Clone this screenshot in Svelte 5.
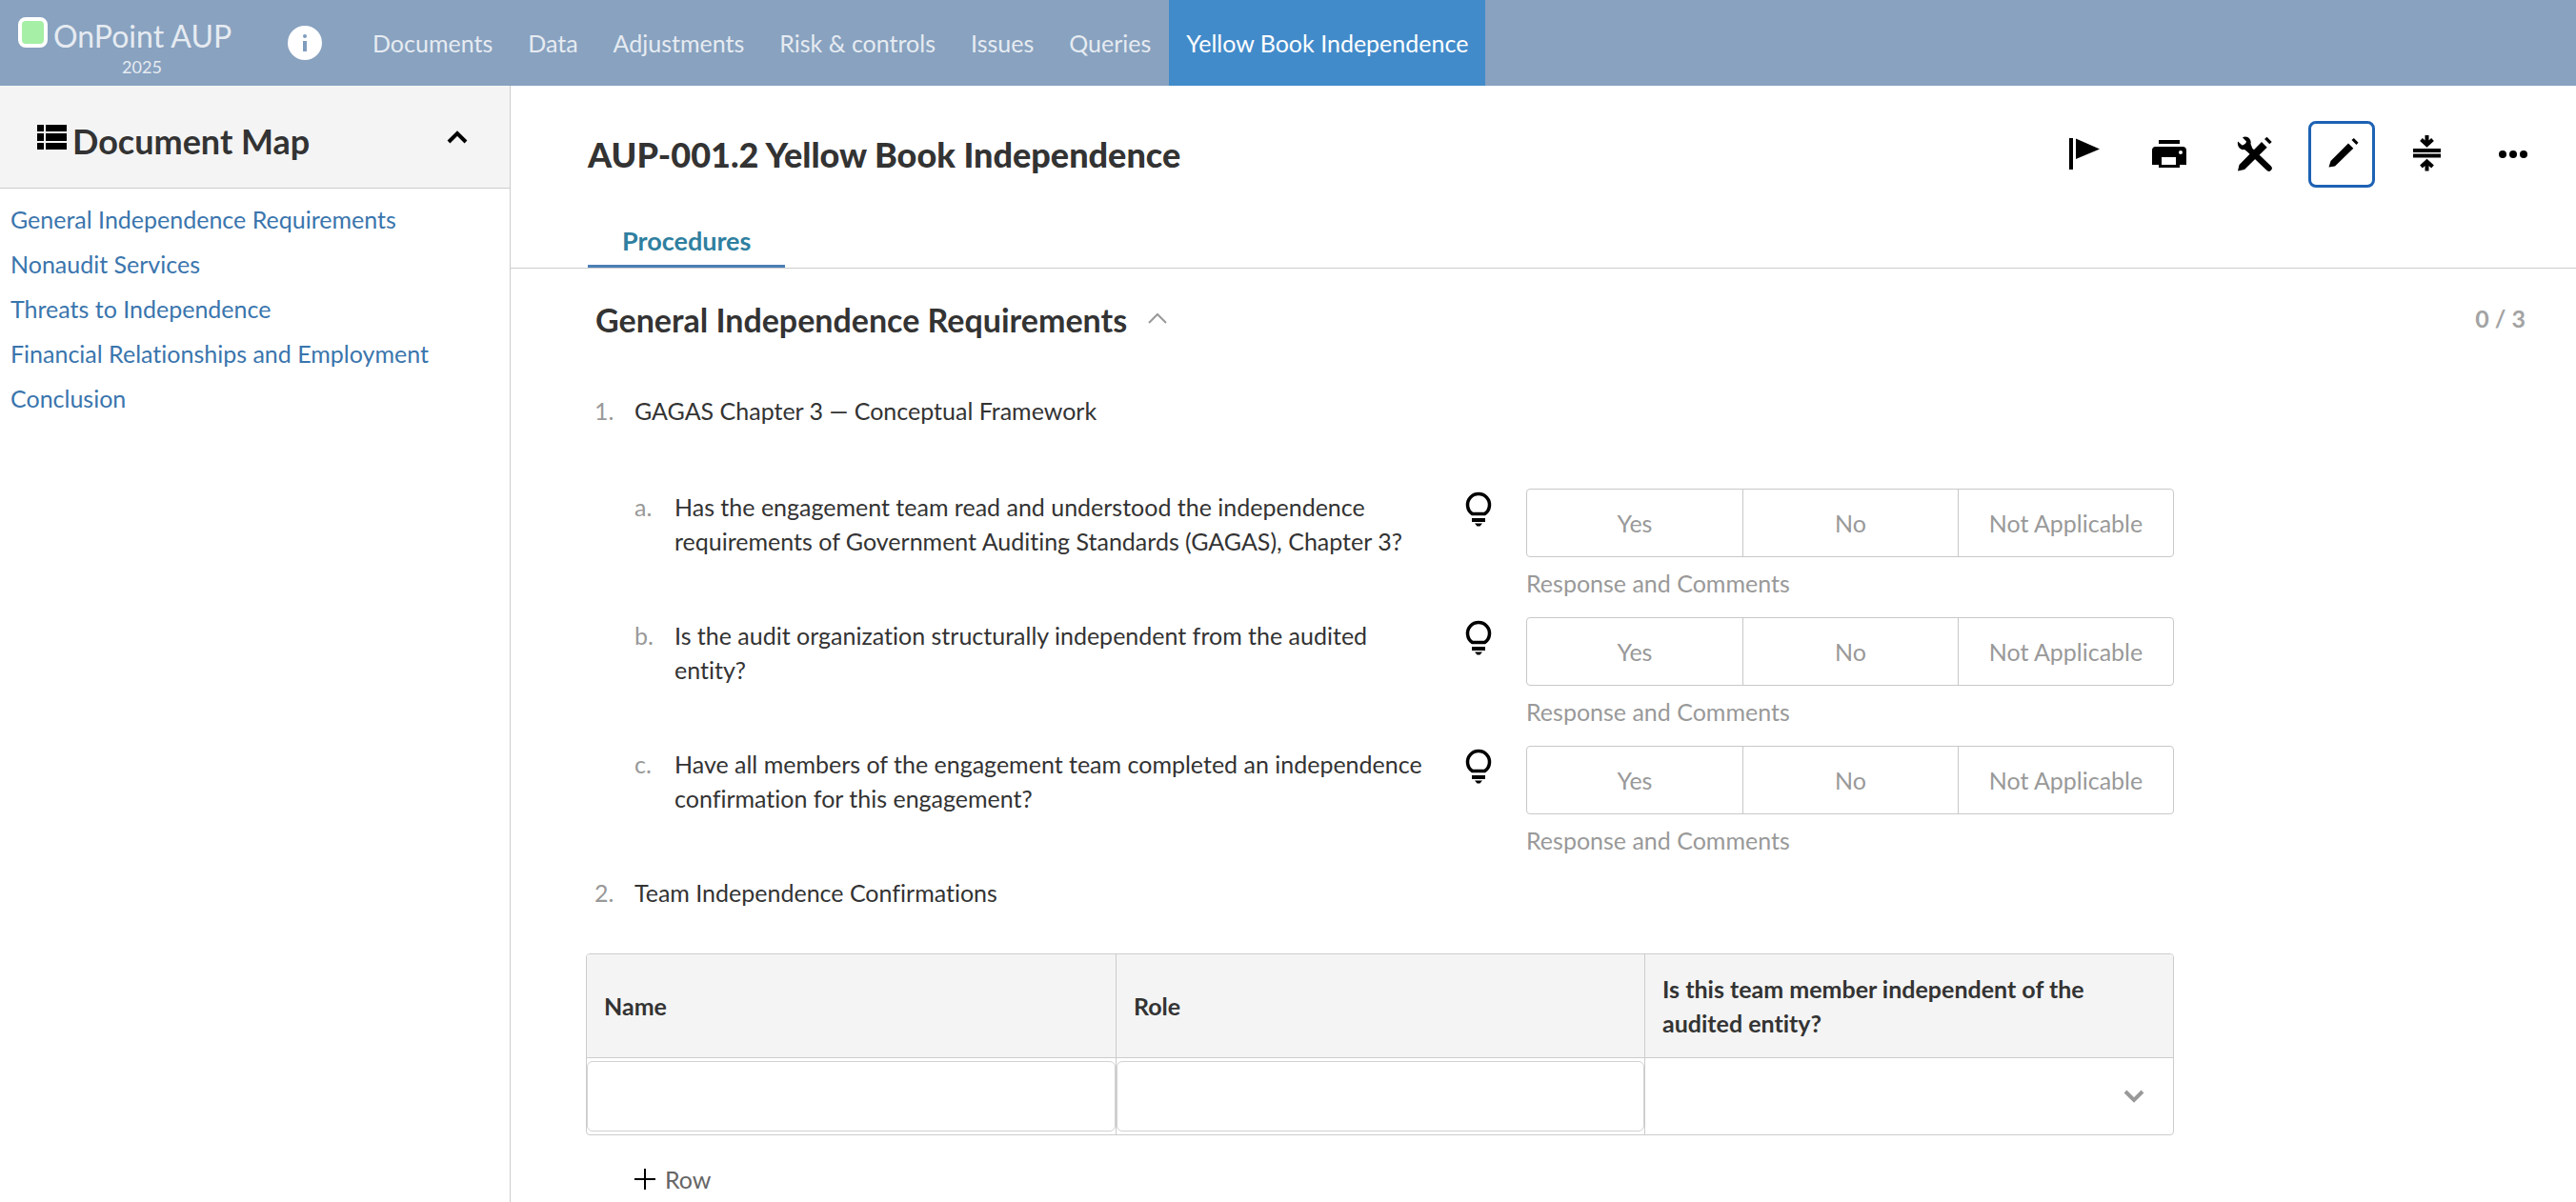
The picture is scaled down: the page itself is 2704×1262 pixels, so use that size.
<script>
    let navItems = ['Documents', 'Data', 'Adjustments', 'Risk & controls', 'Issues', 'Queries', 'Yellow Book Independence']
    let activeNav = 'Yellow Book Independence';

    let sections = [
        'General Independence Requirements',
        'Nonaudit Services',
        'Threats to Independence',
        'Financial Relationships and Employment',
        'Conclusion'
    ]

    let questions = [
        { key: 'a', text: 'Has the engagement team read and understood the independence requirements of Government Auditing Standards (GAGAS), Chapter 3?', answer: '' },
        { key: 'b', text: 'Is the audit organization structurally independent from the audited entity?', answer: '' },
        { key: 'c', text: 'Have all members of the engagement team completed an independence confirmation for this engagement?', answer: '' }
    ]
    let options = ['Yes', 'No', 'Not Applicable']

    let members = [{ name: '', role: '', independent: '' }]
    let mapOpen = true;
    let sectionOpen = true;

    $: answered = questions.filter(q => q.answer !== '').length

    const addRow = ()=>{
        members = [...members, { name: '', role: '', independent: '' }]
    }
</script>

<div class="page">
    <header class="topbar">
        <div class="brand">
            <div class="brand-name">
                <span class="logo"></span>
                <span>OnPoint AUP</span>
            </div>
            <span class="year">2025</span>
        </div>
        <button class="info" aria-label="Engagement information">
            <svg width="36" height="36" viewBox="0 0 36 36">
                <circle cx="18" cy="18" r="18" fill="#fff" />
                <circle cx="18" cy="11" r="2" fill="#7f9cbd" />
                <rect x="16" y="16" width="4" height="11" fill="#7f9cbd" />
            </svg>
        </button>
        <nav>
            {#each navItems as item (item)}
                <a href="#top" class:active={item === activeNav}>{item}</a>
            {/each}
        </nav>
    </header>

    <div class="body">
        <aside>
            <div class="map-header">
                <svg width="31" height="26" viewBox="0 0 31 26">
                    <path d="M0 0h7v7H0zM9 0h22v7H9zM0 9h7v8H0zM9 9h22v8H9zM0 19h7v7H0zM9 19h22v7H9z" />
                </svg>
                <h2>Document Map</h2>
                <button class="toggle" aria-label="Toggle document map" on:click={() => mapOpen = !mapOpen}>
                    <svg width="22" height="14" viewBox="0 0 22 14">
                        <path d="M2 12L11 3L20 12" fill="none" stroke="#000" stroke-width="4" />
                    </svg>
                </button>
            </div>
            {#if mapOpen}
                <div class="map-links">
                    {#each sections as section (section)}
                        <a href="#top">{section}</a>
                    {/each}
                </div>
            {/if}
        </aside>

        <main>
            <div class="title-row">
                <h1>AUP-001.2 Yellow Book Independence</h1>
                <div class="tools">
                    <button aria-label="Flag">
                        <svg viewBox="0 0 68 68">
                            <path d="M18 17h4v33h-4zM25 17.500L50 28.500L25 39z" />
                        </svg>
                    </button>
                    <button aria-label="Print">
                        <svg viewBox="0 0 68 68">
                            <path d="M22 19h22v4H22z" />
                            <path fill-rule="evenodd" d="M18 26h29a4 4 0 0 1 4 4v15h-7v3H22v-3h-7V30a4 4 0 0 1 3-4zM25 37v8h15v-8zM47 32a2 2 0 1 0-4 0a2 2 0 1 0 4 0z" />
                        </svg>
                    </button>
                    <button aria-label="Tools">
                        <svg viewBox="0 0 68 68">
                            <path d="M15 51.500L16.500 45L40 21L45.700 26.700L22 50zM45.500 15.700L50.700 21L48.300 23.300L43 18z" />
                            <path d="M24 26L47.500 48.500" fill="none" stroke="#000" stroke-width="6.500" stroke-linecap="round" />
                            <path d="M20 16.500C24 13.500 30 18 28.500 23L30 27L25 31L22 29C18 30 14 26 15 20.500L19.500 24.500L23 23.500L24 20.500z" />
                        </svg>
                    </button>
                    <button aria-label="Edit" class="selected">
                        <svg viewBox="0 0 68 68">
                            <path d="M20.500 47.500L22.500 41L41 22.500L46.300 27.700L27 46.500zM46.800 17L51.500 21.700L49.500 24L44.500 19z" />
                        </svg>
                    </button>
                    <button aria-label="Collapse all">
                        <svg viewBox="0 0 68 68">
                            <path d="M19 28h29v4H19zM19 33.500h29v4H19z" />
                            <path d="M33.500 14V24M27.500 18.500L33.500 24L39.500 18.500M33.500 51.500V41M27.500 47L33.500 41.500L39.500 47" fill="none" stroke="#000" stroke-width="4" />
                        </svg>
                    </button>
                    <button aria-label="More">
                        <svg viewBox="0 0 68 68">
                            <circle cx="23" cy="34" r="4" />
                            <circle cx="34" cy="34" r="4" />
                            <circle cx="45" cy="34" r="4" />
                        </svg>
                    </button>
                </div>
            </div>

            <div class="tabs">
                <button class="tab">Procedures</button>
            </div>

            <div class="section-header">
                <h2>General Independence Requirements</h2>
                <button class="toggle" aria-label="Toggle section" on:click={() => sectionOpen = !sectionOpen}>
                    <svg width="20" height="12" viewBox="0 0 20 12">
                        <path d="M1 11L10 2L19 11" fill="none" stroke="#999" stroke-width="2" />
                    </svg>
                </button>
                <span class="count">{answered} / {questions.length}</span>
            </div>

            {#if sectionOpen}
                <div class="procedures">
                    <div class="item">
                        <span class="num">1.</span>
                        <span>GAGAS Chapter 3 — Conceptual Framework</span>
                    </div>
                    <div class="questions">
                        {#each questions as question (question.key)}
                            <div class="question">
                                <span class="num">{question.key}.</span>
                                <p>{question.text}</p>
                                <button class="hint" aria-label="Guidance">
                                    <svg width="28" height="38" viewBox="0 0 28 38">
                                        <path d="M7.500 23.500A11.500 11.500 0 1 1 20.500 23.500z" fill="none" stroke="#000" stroke-width="3.500" stroke-linejoin="round" />
                                        <path d="M7 28h14v4H7zM10 33.500h8l-2.500 3h-3z" />
                                    </svg>
                                </button>
                                <div class="response">
                                    <div class="options">
                                        {#each options as option (option)}
                                            <button class:chosen={question.answer === option} on:click={() => question.answer = option}>{option}</button>
                                        {/each}
                                    </div>
                                    <button class="comment">Response and Comments</button>
                                </div>
                            </div>
                        {/each}
                    </div>
                    <div class="item">
                        <span class="num">2.</span>
                        <span>Team Independence Confirmations</span>
                    </div>
                    <table>
                        <thead>
                            <tr>
                                <th>Name</th>
                                <th>Role</th>
                                <th>Is this team member independent of the audited entity?</th>
                            </tr>
                        </thead>
                        <tbody>
                            {#each members as member, i (i)}
                                <tr>
                                    <td><input type="text" aria-label="Name" bind:value={member.name}></td>
                                    <td><input type="text" aria-label="Role" bind:value={member.role}></td>
                                    <td>
                                        <div class="select">
                                            <select aria-label="Is this team member independent of the audited entity?" bind:value={member.independent}>
                                                <option value=""></option>
                                                <option value="yes">Yes</option>
                                                <option value="no">No</option>
                                            </select>
                                            <svg width="22" height="14" viewBox="0 0 22 14">
                                                <path d="M2 2L11 11L20 2" fill="none" stroke="#999" stroke-width="4" />
                                            </svg>
                                        </div>
                                    </td>
                                </tr>
                            {/each}
                        </tbody>
                    </table>
                    <button class="add-row" on:click={addRow}>
                        <svg width="24" height="24" viewBox="0 0 24 24">
                            <path d="M12 1v22M1 12h22" stroke="#000" stroke-width="2" />
                        </svg>
                        Row
                    </button>
                </div>
            {/if}
        </main>
    </div>
</div>

<style>
    :global(body) {
        margin: 0;
        background: #fff;
    }
    .page {
        min-height: 100vh;
        display: flex;
        flex-direction: column;
        font-family: Lato, sans-serif;
        font-size: 25px;
        line-height: 36px;
        font-variant-ligatures: none;
        color: #333;
    }
    .page * {
        box-sizing: border-box;
    }
    button {
        padding: 0;
        border: 0;
        background: none;
        font: inherit;
        color: inherit;
        cursor: pointer;
    }
    svg {
        display: block;
        flex-shrink: 0;
    }
    a {
        text-decoration: none;
    }
    h1, h2, p {
        margin: 0;
    }

    .topbar {
        height: 90px;
        display: flex;
        align-items: center;
        background: #88a2c0;
        color: #e6ebf1;
    }
    .brand {
        width: 302px;
        padding: 10px 0 0 19px;
        display: flex;
        flex-direction: column;
    }
    .brand-name {
        display: flex;
        align-items: center;
        gap: 6px;
        font-size: 32px;
        line-height: 40px;
    }
    .logo {
        width: 31px;
        height: 32px;
        margin-bottom: 8px;
        border: 4px solid #fff;
        border-radius: 8px;
        background: #a6efa6;
    }
    .year {
        padding-left: 32px;
        width: 228px;
        text-align: center;
        font-size: 18px;
        line-height: 24px;
    }
    .topbar nav {
        height: 100%;
        margin-left: 35px;
        display: flex;
        gap: 1px;
    }
    .topbar nav a {
        padding: 0 18px;
        display: flex;
        align-items: center;
        color: #e6ebf1;
    }
    .topbar nav a.active {
        background: #428bca;
        color: #fff;
    }

    .body {
        flex: 1;
        display: flex;
    }
    aside {
        width: 536px;
        flex-shrink: 0;
        border-right: 1px solid #ccc;
    }
    .map-header {
        height: 108px;
        padding: 8px 44px 0 39px;
        display: flex;
        align-items: center;
        gap: 6px;
        background: #f4f4f4;
        border-bottom: 1px solid #ccc;
    }
    .map-header svg {
        margin-bottom: 8px;
    }
    .map-header h2 {
        flex: 1;
        font-size: 36px;
        line-height: 44px;
    }
    .map-links {
        padding: 9px 11px;
        display: flex;
        flex-direction: column;
    }
    .map-links a {
        line-height: 47px;
        color: #3a75ad;
    }

    main {
        flex: 1;
        min-width: 0;
    }
    .title-row {
        padding: 37px 31px 0 81px;
        display: flex;
        align-items: center;
        justify-content: space-between;
    }
    .title-row h1 {
        font-size: 36px;
        line-height: 44px;
        font-weight: 900;
    }
    .tools {
        display: flex;
        gap: 20px;
    }
    .tools button {
        width: 70px;
        height: 70px;
        border: 3px solid transparent;
        border-radius: 8px;
        display: flex;
        align-items: center;
        justify-content: center;
    }
    .tools button.selected {
        border-color: #1d62b4;
    }
    .tools svg {
        width: 68px;
        height: 68px;
    }
    .tabs {
        padding-left: 81px;
        margin-top: 28px;
        border-bottom: 1px solid #ccc;
    }
    .tab {
        padding: 10px 36px 7px;
        border-bottom: 3px solid #4a7fb5;
        font-size: 27px;
        font-weight: 700;
        color: #2f7fa0;
    }

    .section-header {
        padding: 32px 53px 0 89px;
        display: flex;
        align-items: center;
    }
    .section-header h2 {
        font-size: 34px;
        line-height: 44px;
    }
    .section-header .toggle {
        margin-left: 22px;
        padding-bottom: 4px;
    }
    .count {
        margin-left: auto;
        padding-bottom: 4px;
        font-weight: 700;
        color: #a3a3a3;
    }
    .procedures {
        max-width: 1746px;
        padding: 55px 0 40px 79px;
    }
    .item {
        padding-left: 9px;
        display: flex;
    }
    .num {
        width: 42px;
        flex-shrink: 0;
        color: #999;
    }
    .questions {
        padding: 64px 0 1px 51px;
    }
    .question {
        min-height: 135px;
        display: flex;
        align-items: flex-start;
    }
    .question > .num, .question p {
        padding-top: 1px;
    }
    .question p {
        flex: 1;
        padding-right: 32px;
    }
    .hint {
        margin: 3px 36px 0 0;
    }
    .response {
        width: 680px;
        flex-shrink: 0;
    }
    .options {
        height: 72px;
        display: grid;
        grid-template-columns: repeat(3, 1fr);
        border: 1px solid #c8c8c8;
        border-radius: 4px;
        color: #999;
    }
    .options button + button {
        border-left: 1px solid #c8c8c8;
    }
    .options button.chosen {
        background: #428bca;
        color: #fff;
    }
    .comment {
        display: block;
        margin-top: 9px;
        color: #999;
    }

    table {
        width: 100%;
        margin-top: 46px;
        table-layout: fixed;
        border-collapse: separate;
        border-spacing: 0;
        border: 1px solid #ccc;
        border-radius: 4px;
        overflow: hidden;
    }
    th {
        height: 108px;
        padding: 18px;
        text-align: left;
        vertical-align: middle;
        background: #f4f4f4;
    }
    td {
        height: 81px;
        padding: 3px 0;
        border-top: 1px solid #ccc;
    }
    th + th, td + td {
        border-left: 1px solid #ccc;
    }
    td input, td select {
        display: block;
        width: 100%;
        height: 74px;
        padding: 0 16px;
        font: inherit;
        color: inherit;
        background: #fff;
    }
    td input {
        border: 1px solid #d2d2d2;
        border-radius: 6px;
    }
    td select {
        border: 0;
        appearance: none;
    }
    .select {
        position: relative;
    }
    .select svg {
        position: absolute;
        top: 30px;
        right: 30px;
        pointer-events: none;
    }
    .add-row {
        margin: 28px 0 0 50px;
        display: flex;
        align-items: center;
        gap: 9px;
        color: #666;
    }
</style>
